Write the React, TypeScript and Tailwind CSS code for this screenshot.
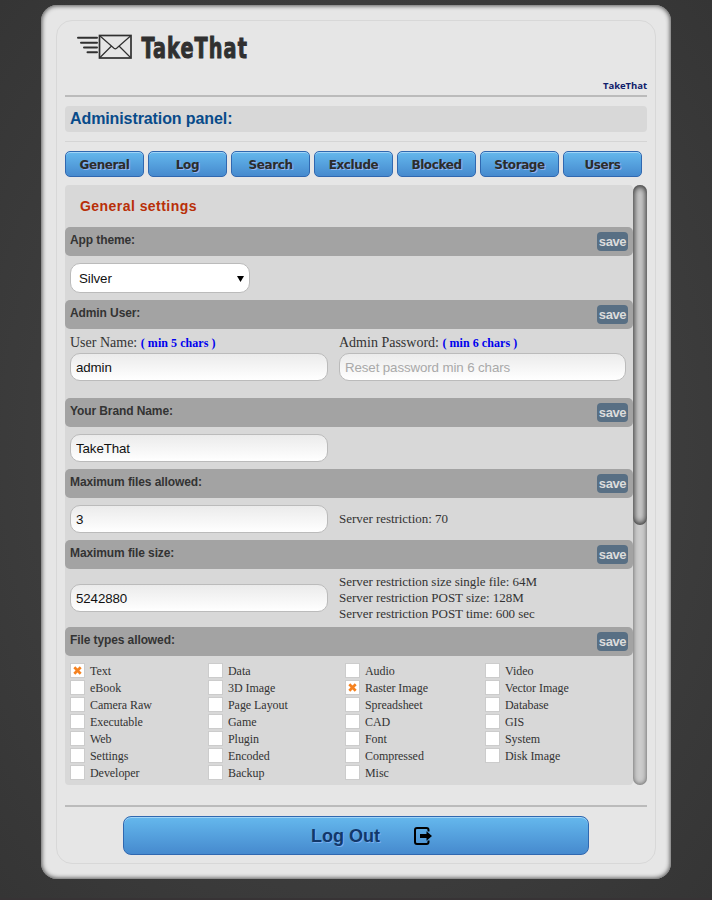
import type { ReactNode } from "react";

const tabs = ["General", "Log", "Search", "Exclude", "Blocked", "Storage", "Users"];

const fileTypes: { width: string; items: string[] }[] = [
  { width: "w-[138px]", items: ["Text", "eBook", "Camera Raw", "Executable", "Web", "Settings", "Developer"] },
  { width: "w-[137px]", items: ["Data", "3D Image", "Page Layout", "Game", "Plugin", "Encoded", "Backup"] },
  { width: "w-[140px]", items: ["Audio", "Raster Image", "Spreadsheet", "CAD", "Font", "Compressed", "Misc"] },
  { width: "w-[120px]", items: ["Video", "Vector Image", "Database", "GIS", "System", "Disk Image"] },
];
const checked = ["Text", "Raster Image"];

const sans = "font-['Liberation_Sans',Arial,sans-serif]";
const serif = "font-['Liberation_Serif','Times_New_Roman',serif]";

function Bar({ title }: { title: string }) {
  return (
    <div className={`${sans} flex h-[29px] shrink-0 justify-between rounded-[5px] bg-[#a3a3a3] pt-[5px] pr-[5px] pl-[5px]`}>
      <span className="text-[12px] leading-4 font-bold tracking-[-0.1px] whitespace-nowrap text-[#333]">{title}</span>
      <button className="h-[19px] w-[31px] rounded-[4px] bg-[#586f84] text-center text-[13px] leading-[19px] font-bold tracking-[-0.4px] text-[#dcdcdc]">
        save
      </button>
    </div>
  );
}

function Field({ value, placeholder, width = "w-[258px]" }: { value?: string; placeholder?: string; width?: string }) {
  return (
    <input
      readOnly
      value={value ?? ""}
      placeholder={placeholder}
      className={`${sans} ${width} block h-7 shrink-0 rounded-[10px] border border-[#bbb] bg-linear-to-b from-[#ebebeb] to-white px-[5px] text-[13.33px] tracking-[-0.12px] text-[#111] outline-none placeholder:text-[#a9a9a9]`}
    />
  );
}

function Label({ children, hint }: { children: ReactNode; hint: string }) {
  return (
    <div className={`${serif} h-[22px] pt-px text-[14px] leading-[22px] whitespace-nowrap text-[#333]`}>
      {children} <b className="text-[12px] tracking-[0.05px] text-[#0000ee]">{hint}</b>
    </div>
  );
}

function Logo() {
  return (
    <svg width="175" height="40" viewBox="0 0 175 40" className="block overflow-visible">
      <g fill="none" stroke="#303030" strokeWidth="2">
        <path d="M2 7.7h19M5 12.7h16M8 17.5h13M11.500 22.300h9.500" strokeLinecap="round" />
        <rect x="23.500" y="5.500" width="31.500" height="22.500" strokeWidth="1.7" />
        <path d="M24 6l14 12.300q1.300 1 2.600 0L54.500 6M24 27.500l11.500-11.500M54.500 27.500L43 16" strokeWidth="1.2" />
      </g>
      <text
        x="65.5"
        y="27.500"
        textLength="106.500"
        lengthAdjust="spacingAndGlyphs"
        fill="#303030"
        stroke="#303030"
        strokeWidth="1"
        fontSize="29"
        fontWeight="700"
        letterSpacing="1.5"
        fontFamily="'DejaVu Sans Condensed', 'DejaVu Sans', sans-serif"
      >
        TakeThat
      </text>
    </svg>
  );
}

function FileType({ name }: { name: string }) {
  return (
    <label className="flex h-[17px] items-start gap-[5px]">
      <span className="flex size-[15px] items-center justify-center border border-[#ccc] bg-white">
        {checked.includes(name) && (
          <svg width="9" height="9" viewBox="0 0 9 9">
            <path d="M1.3 1.3l6.4 6.4M7.7 1.3L1.3 7.7" stroke="#f58220" strokeWidth="2.7" />
          </svg>
        )}
      </span>
      <span className={`${serif} text-[12px] leading-4 tracking-[-0.05px] whitespace-nowrap text-[#333]`}>{name}</span>
    </label>
  );
}

export default function App() {
  return (
    <div className="h-[900px] w-[712px] overflow-hidden border-b-2 border-[#373335] bg-[radial-gradient(ellipse_at_center,#444_0%,#3d3d3d_60%,#353535_100%)] pt-[5px] pl-[41px]">
      <div className="h-[874px] w-[630px] rounded-[16px] bg-[#e6e6e6] p-[15px] shadow-[inset_0_0_4px_1px_#555]">
        <div className="flex h-[844px] w-[600px] flex-col rounded-[16px] border border-[#d8d8d8] px-2">
          <header className="flex h-[76px] shrink-0 flex-col justify-between border-b-2 border-[#bbb] pt-[9px]">
            <div className="pl-[11px]">
              <Logo />
            </div>
            <div className="pb-[3px] text-right font-['Open_Sans',sans-serif] text-[9.5px] leading-[13px] font-bold tracking-[-0.05px] text-[#10206b]">
              TakeThat
            </div>
          </header>
          <h1 className={`${sans} mt-[9px] h-[26px] shrink-0 rounded-[4px] bg-[#d8d8d8] pl-[5px] text-[16px] leading-[25px] font-bold tracking-[-0.1px] text-[#084b8a]`}>
            Administration panel:
          </h1>
          <nav className="mt-[9px] flex shrink-0 gap-1 border-t border-[#d5d5d5] pt-[9px]">
            {tabs.map((t) => (
              <button
                key={t}
                className="h-[26px] w-[79px] rounded-[5px] border border-[#3068b0] bg-linear-to-b from-[#65b8ed] to-[#468ace] pt-px text-center font-['DejaVu_Sans',Verdana,sans-serif] text-[12px] leading-6 font-bold tracking-[-0.4px] text-[#2c2c2c] shadow-[inset_0_1px_0_#a0d4f7] [text-shadow:1px_1px_0_#93b4f0]"
              >
                {t}
              </button>
            ))}
          </nav>
          <div className="mt-2 flex h-[600px] shrink-0">
            <main className="flex w-[568px] flex-col rounded-[4px] bg-[#d8d8d8]">
              <h2 className={`${sans} h-[42px] shrink-0 pl-[15px] text-[14px] leading-[42px] font-bold tracking-[0.45px] text-[#b92f08]`}>
                General settings
              </h2>
              <Bar title="App theme:" />
              <div className="h-11 shrink-0 pt-[7px] pl-[5px]">
                <div className={`${sans} flex h-[30px] w-[180px] items-center justify-between rounded-[10px] border border-[#bbb] bg-white pt-px pr-[5px] pl-2 text-[13.33px] tracking-[-0.1px] text-[#111]`}>
                  Silver
                  <svg width="7" height="6" viewBox="0 0 7 6">
                    <path d="M0 0h7L3.5 6z" fill="#000" />
                  </svg>
                </div>
              </div>
              <Bar title="Admin User:" />
              <div className="flex h-[69px] shrink-0 gap-[11px] pt-[2px] pl-[5px]">
                <div>
                  <Label hint="( min 5 chars )">User Name:</Label>
                  <Field value="admin" />
                </div>
                <div>
                  <Label hint="( min 6 chars )">Admin Password:</Label>
                  <Field placeholder="Reset password min 6 chars" width="w-[287px]" />
                </div>
              </div>
              <Bar title="Your Brand Name:" />
              <div className="h-[42px] shrink-0 pt-[7px] pl-[5px]">
                <Field value="TakeThat" />
              </div>
              <Bar title="Maximum files allowed:" />
              <div className="flex h-[42px] shrink-0 items-center gap-[11px] pl-[5px]">
                <Field value="3" />
                <span className={`${serif} text-[13px] tracking-[-0.04px] text-[#333]`}>Server restriction: 70</span>
              </div>
              <Bar title="Maximum file size:" />
              <div className="flex h-[58px] shrink-0 items-center gap-[11px] pl-[5px]">
                <Field value="5242880" />
                <div className={`${serif} text-[13px] leading-4 tracking-[-0.04px] whitespace-nowrap text-[#333]`}>
                  <p>Server restriction size single file: 64M</p>
                  <p>Server restriction POST size: 128M</p>
                  <p>Server restriction POST time: 600 sec</p>
                </div>
              </div>
              <Bar title="File types allowed:" />
              <div className="flex pt-[7px] pl-[5px]">
                {fileTypes.map((col) => (
                  <div key={col.items[0]} className={`${col.width} flex shrink-0 flex-col`}>
                    {col.items.map((name) => (
                      <FileType key={name} name={name} />
                    ))}
                  </div>
                ))}
              </div>
            </main>
            <div className="w-[14px] rounded-[7px] bg-[#ccc] shadow-[inset_0_0_5px_#555]">
              <div className="h-[340px] rounded-[7px] bg-[#ccc] shadow-[inset_0_0_6px_1px_#222]" />
            </div>
          </div>
          <footer className="mt-5 flex shrink-0 justify-center border-t-2 border-[#bbb] pt-[9px]">
            <button className="flex h-[39px] w-[466px] items-center justify-center gap-8 rounded-[8px] border border-[#3068b0] bg-linear-to-b from-[#65b8ed] to-[#468ace] pl-[31px] shadow-[inset_0_1px_0_#a0d4f7]">
              <span className={`${sans} pt-[2px] text-[18px] font-bold text-[#12386a] [text-shadow:1px_1px_0_#78aef0]`}>Log Out</span>
              <svg width="20" height="20" viewBox="0 0 20 20">
                <path d="M16.500 5.500V4q0-2-2-2H5Q3 2 3 4v12q0 2 2 2h9.500q2 0 2-2v-1.500" fill="none" stroke="#000" strokeWidth="2" />
                <path d="M8 8h6.500V5.200L20 10l-5.500 4.800V12H8z" fill="#000" />
              </svg>
            </button>
          </footer>
        </div>
      </div>
    </div>
  );
}
